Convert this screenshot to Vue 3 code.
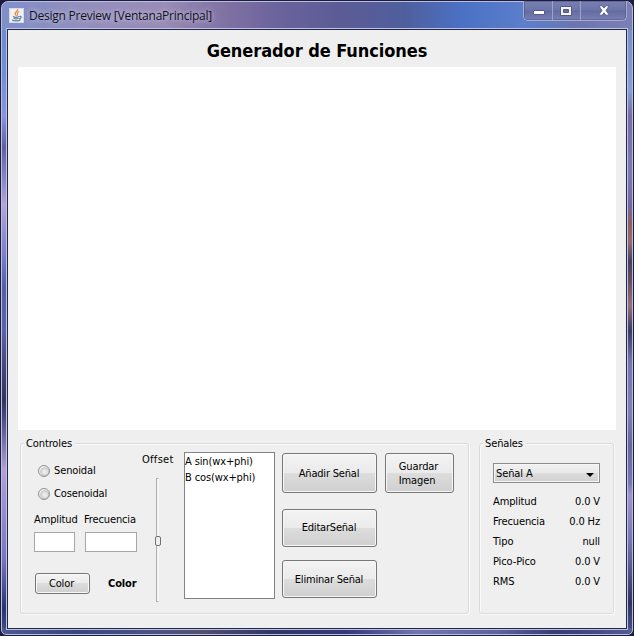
<script setup>
import { ref } from 'vue'

const waves = ['A sin(wx+phi)', 'B cos(wx+phi)']
const actions = [
  { label: 'Añadir Señal', kind: 'add' },
  { label: 'EditarSeñal', kind: 'edit' },
  { label: 'Eliminar Señal', kind: 'remove' },
]
const readings = [
  { name: 'Amplitud', value: '0.0 V' },
  { name: 'Frecuencia', value: '0.0 Hz' },
  { name: 'Tipo', value: 'null' },
  { name: 'Pico-Pico', value: '0.0 V' },
  { name: 'RMS', value: '0.0 V' },
]
const amplitude = ref('')
const frequency = ref('')
</script>

<template>
  <div class="desktop">
    <div class="window">
      <header class="titlebar">
        <svg class="app-icon" viewBox="0 0 15 15" width="15" height="15">
          <rect x="0.5" y="0.5" width="14" height="14" fill="#f1f2f4" stroke="#d5d8e2" />
          <path d="M8.6 1.2C9.4 3.2 5.6 4 6.1 5.7C6.3 6.5 7.3 7 7.1 7.9" fill="none" stroke="#e58b42" stroke-width="1.4" />
          <path d="M10.3 3.6C8.2 4.4 7.9 5.2 8.6 6.1C8.9 6.7 8.7 7.2 8.2 7.7" fill="none" stroke="#e58b42" stroke-width="1.1" />
          <path d="M4 8.5C5.5 9.3 8.6 9.2 10 8.5M4.6 10.2C6 10.9 8.4 10.8 9.6 10.2M3 12C5 13.3 9.6 13.2 11.6 11.8M10.3 8.5C13 7.7 12.6 10.3 10.2 10.8" fill="none" stroke="#61809f" stroke-width="1.2" />
        </svg>
        <span class="caption">Design Preview [VentanaPrincipal]</span>
        <div class="window-buttons">
          <span class="wb wb-min">
            <svg viewBox="0 0 12 5" width="12" height="5"><rect x="0.5" y="0.5" width="11" height="4" rx="0.5" fill="#fff" stroke="#565b84" /></svg>
          </span>
          <span class="wb wb-max">
            <svg viewBox="0 0 12 10" width="12" height="10"><path fill-rule="evenodd" d="M0.5 0.5H11.5V9.5H0.5ZM3.5 3.5V6.5H8.5V3.5Z" fill="#f4f4f8" stroke="#565b84" /></svg>
          </span>
          <span class="wb wb-close">
            <svg viewBox="0 0 12 11" width="12" height="11"><path d="M0.8 0.8H4.2L6 3.1L7.8 0.8H11.2L8 5.4L11.4 10.2H7.9L6 7.8L4.1 10.2H0.6L4 5.4Z" fill="#fff" stroke="#565b84" stroke-width="0.9" /></svg>
          </span>
        </div>
      </header>

      <main class="client">
        <h1>Generador de Funciones</h1>
        <div class="plot"></div>

        <div class="panels">
          <section class="panel controls">
            <span class="legend">Controles</span>

            <div class="wave-form">
              <label class="radio"><i></i><span>Senoidal</span></label>
              <label class="radio"><i></i><span>Cosenoidal</span></label>
              <div class="fields">
                <label class="field amp"><span>Amplitud</span><input v-model="amplitude" type="text" /></label>
                <label class="field freq"><span>Frecuencia</span><input v-model="frequency" type="text" /></label>
              </div>
              <div class="color-row">
                <button class="btn color-btn">Color</button>
                <strong>Color</strong>
              </div>
            </div>

            <div class="offset">
              <span>Offset</span>
              <div class="track"><div class="thumb"></div></div>
            </div>

            <ul class="wave-list">
              <li v-for="wave in waves" :key="wave">{{ wave }}</li>
            </ul>

            <div class="actions">
              <button v-for="a in actions" :key="a.kind" class="btn" :class="a.kind">{{ a.label }}</button>
            </div>

            <button class="btn save"><span>Guardar<br />Imagen</span></button>
          </section>

          <section class="panel signals">
            <span class="legend">Señales</span>
            <div class="combo">
              <span>Señal A</span>
              <svg viewBox="0 0 8 4" width="8" height="4"><path d="M0 0H8L4 4Z" fill="#000" /></svg>
            </div>
            <dl>
              <div v-for="r in readings" :key="r.name" class="reading">
                <dt>{{ r.name }}</dt>
                <dd>{{ r.value }}</dd>
              </div>
            </dl>
          </section>
        </div>
      </main>
    </div>
  </div>
</template>

<style>
body {
  margin: 0;
  overflow: hidden;
}
</style>

<style scoped>
* {
  box-sizing: border-box;
}
.desktop {
  width: 634px;
  height: 636px;
  padding: 1px;
  background: #1d1c3c;
  font-family: "DejaVu Sans Condensed", "DejaVu Sans", sans-serif;
  font-stretch: condensed;
  font-size: 11px;
  line-height: 14px;
  letter-spacing: -0.12px;
  color: #000;
}
.window {
  display: flex;
  flex-direction: column;
  width: 632px;
  height: 634px;
  padding: 0 5px 5px;
  border: 1px solid #b9bddf;
  border-radius: 7px 7px 5px 5px;
  background:
    linear-gradient(90deg, #7f8fca 0, #9490bf 12%, #9a8db8 26%, #7f70a3 36%, #6a639c 44%, #5b5c95 54%, #4f5f9e 64%, #4b71c4 73%, #5b7fcb 83%, #6c75b0 91%, #7b80b4 100%) 0 0 / 100% 28px no-repeat,
    linear-gradient(90deg, #4d5a91 0, #38477b 12%, #4c5384 24%, #55516f 31%, #303665 43%, #353a78 55%, #7475ae 66%, #5d619c 79%, #363b70 88%, #535b97 100%) 0 100% / 100% 6px no-repeat,
    linear-gradient(180deg, #718ac4 0, #6d90d8 11%, #8795df 18%, #6060a0 23%, #8a86c6 28%, #b6a3d7 32%, #7c7fca 40%, #5261a7 45%, #5b62a6 52%, #4a4a80 57%, #33345b 63%, #4b4c83 66%, #b3a0d7 74%, #7c75bf 88%, #26366e 96%, #465186 100%) 0 0 / 6px 100% no-repeat,
    linear-gradient(180deg, #718ac4 0, #84a0d5 14%, #786da4 18%, #8079b0 27%, #7468a0 32%, #925c61 35%, #9b6a6d 38%, #49405e 41%, #674c60 44%, #9a7078 48%, #383c61 52%, #7875b2 57%, #8080b9 65%, #6667a0 70%, #7876b2 76%, #a393cc 78%, #7778b4 85%, #31345c 95%, #49528d 100%) 100% 0 / 6px 100% no-repeat;
}
.titlebar {
  display: flex;
  flex: 0 0 27px;
  align-items: flex-start;
  padding-left: 2px;
}
.app-icon {
  margin-top: 6px;
}
.caption {
  margin: 5px 0 0 5px;
  font: 12px/17px "Open Sans", "Noto Sans", sans-serif;
  letter-spacing: -0.23px;
  white-space: nowrap;
  color: #11121e;
  text-shadow: 0 0 5px rgba(225, 221, 242, 0.7), 0 0 9px rgba(225, 221, 242, 0.5);
}
.window-buttons {
  display: flex;
  width: 104px;
  height: 20px;
  margin: -1px 0 0 auto;
  border: 1px solid #a5aad0;
  border-top: 0;
  border-radius: 0 0 5px 5px;
  background: linear-gradient(180deg, #7980b2, #6c74a8 48%, #636ba3 52%, #7780b3);
  box-shadow: inset 0 0 0 1px rgba(60, 66, 112, 0.35);
}
.wb {
  display: flex;
  justify-content: center;
}
.wb + .wb {
  border-left: 1px solid #9ca3c9;
}
.wb-min {
  width: 28px;
  padding: 9px 0 0 1px;
}
.wb-max {
  width: 28px;
  padding: 5px 2px 0 0;
}
.wb-close {
  flex: 1;
  padding: 4px 0 0;
}
.client {
  width: 620px;
  height: 600px;
  border: 1px solid #23264b;
  outline: 1px solid #bcc3e3;
  background: #efefef;
}
h1 {
  height: 37px;
  margin: 0;
  padding-top: 9px;
  font-size: 18px;
  font-weight: bold;
  line-height: 24px;
  letter-spacing: -0.06px;
  text-align: center;
}
.plot {
  height: 363px;
  margin: 0 10px;
  background: #fff;
}
.panels {
  display: flex;
  gap: 10px;
  padding: 13px 0 0 12px;
}
.panel {
  position: relative;
  height: 171px;
  border: 1px solid #d9dcdf;
  border-radius: 3px;
  box-shadow: inset 1px 1px #fafafa, 1px 1px #fafafa;
}
.legend {
  position: absolute;
  top: -7px;
  left: 3px;
  padding: 0 3px 0 2px;
  background: #efefef;
}
.controls {
  display: flex;
  width: 449px;
}
.wave-form {
  width: 103px;
  margin-left: 13px;
  padding-top: 15px;
}
.radio {
  display: flex;
  align-items: center;
  height: 23px;
  padding-left: 4px;
}
.radio i {
  width: 12px;
  height: 12px;
  margin-right: 4px;
  border: 1px solid #8d8f91;
  border-radius: 50%;
  background: radial-gradient(circle at 58% 58%, #f0f0f0 0, #dfe0e1 34%, #c2c4c6 48%, #f2f2f2 62%);
}
.fields {
  display: flex;
  gap: 10px;
  padding-top: 8px;
}
.field span {
  display: block;
  height: 19px;
  white-space: nowrap;
}
.freq span {
  margin-left: -1px;
}
.field input {
  display: block;
  width: 100%;
  height: 20px;
  padding: 0 2px;
  border: 1px solid #a5a7aa;
  background: #fff;
}
.amp {
  width: 41px;
}
.freq {
  width: 52px;
}
.color-row {
  display: flex;
  align-items: center;
  padding: 21px 0 0 1px;
}
.color-row strong {
  margin-left: 18px;
}
.btn {
  display: flex;
  align-items: center;
  justify-content: center;
  padding: 0;
  border: 1px solid #777;
  border-radius: 3px;
  background: linear-gradient(180deg, #f3f3f3 0, #ebebeb 49%, #dddddd 50%, #cfcfcf 100%);
  box-shadow: inset 0 0 0 1px #f7f7f7;
  font: inherit;
  letter-spacing: inherit;
  color: #000;
  white-space: nowrap;
}
.color-btn {
  width: 55px;
  height: 21px;
  padding-right: 2px;
}
.offset {
  width: 42px;
  padding: 9px 0 0 5px;
}
.offset span {
  letter-spacing: 0.3px;
}
.track {
  width: 3px;
  height: 124px;
  margin: 11px 0 0 14px;
  padding-top: 57px;
  border: 1px solid #b0b0b0;
  border-right-color: #fafafa;
}
.thumb {
  width: 6px;
  height: 10px;
  margin-left: -2px;
  border: 1px solid #6f7173;
  border-radius: 2px;
  background: #efefef;
}
.wave-list {
  width: 91px;
  height: 147px;
  margin: 8px 0 0 5px;
  padding: 1px 0 0;
  border: 1px solid #828487;
  background: #fff;
  line-height: 16px;
  list-style: none;
}
.actions {
  width: 95px;
  margin: 9px 0 0 7px;
}
.actions .btn {
  width: 95px;
  height: 38px;
  padding-right: 1px;
  letter-spacing: -0.2px;
}
.actions .add {
  height: 40px;
  padding-top: 2px;
}
.actions .edit {
  margin-top: 16px;
}
.actions .remove {
  margin-top: 13px;
  padding-top: 2px;
}
.save {
  width: 69px;
  height: 40px;
  margin: 9px 0 0 8px;
  padding: 2px 2px 0 0;
  text-align: left;
}
.signals {
  width: 135px;
  padding: 19px 13px 0;
}
.combo {
  display: flex;
  align-items: center;
  justify-content: space-between;
  height: 20px;
  padding: 1px 5px 0 2px;
  border: 1px solid #8b8d90;
  background: linear-gradient(180deg, #f1f1f1 0, #e9e9e9 49%, #dddddd 50%, #d0d0d0 100%);
  box-shadow: inset 0 0 0 1px #f5f5f5;
}
.combo svg {
  margin-top: 3px;
}
dl {
  margin: 9px 0 0;
}
.reading {
  display: flex;
  justify-content: space-between;
  height: 20px;
  line-height: 20px;
}
dd {
  margin: 0;
}
</style>
